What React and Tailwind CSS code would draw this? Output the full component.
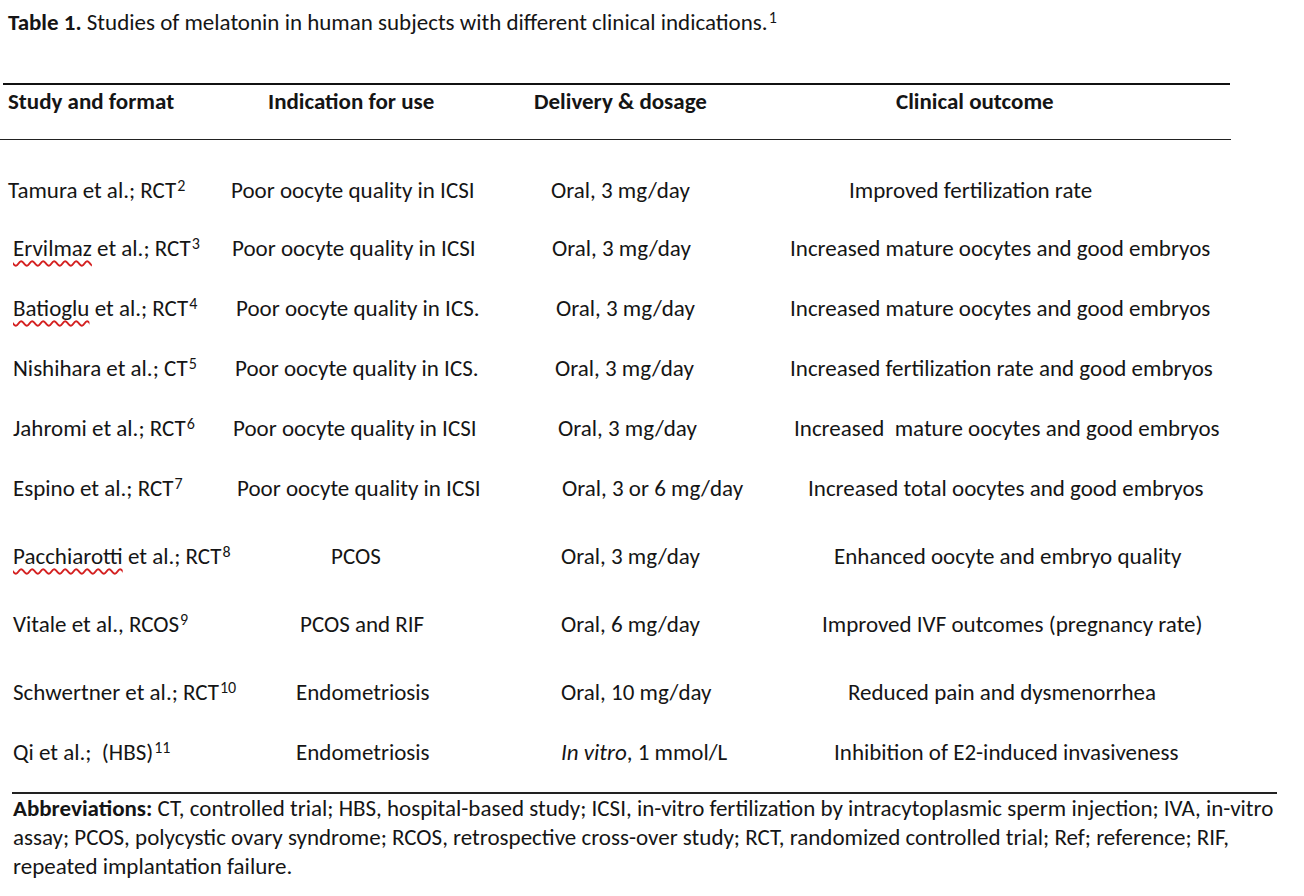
const rows = [
  {
    pads: ["pl-[8px]", "pl-[6px]", "pl-[21px]", "pl-[69px]"],
    mt: "mt-[35px]",
    study: <>Tamura et al.; RCT<Sup>2</Sup></>,
    use: "Poor oocyte quality in ICSI",
    dose: "Oral, 3 mg/day",
    outcome: "Improved fertilization rate",
  },
  {
    pads: ["pl-[13px]", "pl-[7px]", "pl-[22px]", "pl-[10px]"],
    mt: "mt-[28px]",
    study: <><Squiggle>Ervilmaz</Squiggle> et al.; RCT<Sup>3</Sup></>,
    use: "Poor oocyte quality in ICSI",
    dose: "Oral, 3 mg/day",
    outcome: "Increased mature oocytes and good embryos",
  },
  {
    pads: ["pl-[13px]", "pl-[11px]", "pl-[26px]", "pl-[10px]"],
    mt: "mt-[30px]",
    study: <><Squiggle>Batioglu</Squiggle> et al.; RCT<Sup>4</Sup></>,
    use: "Poor oocyte quality in ICS.",
    dose: "Oral, 3 mg/day",
    outcome: "Increased mature oocytes and good embryos",
  },
  {
    pads: ["pl-[13px]", "pl-[10px]", "pl-[25px]", "pl-[10px]"],
    mt: "mt-[30px]",
    study: <>Nishihara et al.; CT<Sup>5</Sup></>,
    use: "Poor oocyte quality in ICS.",
    dose: "Oral, 3 mg/day",
    outcome: "Increased fertilization rate and good embryos",
  },
  {
    pads: ["pl-[13px]", "pl-[8px]", "pl-[28px]", "pl-[14px]"],
    mt: "mt-[30px]",
    study: <>Jahromi et al.; RCT<Sup>6</Sup></>,
    use: "Poor oocyte quality in ICSI",
    dose: "Oral, 3 mg/day",
    outcome: "Increased\u00a0 mature oocytes and good embryos",
  },
  {
    pads: ["pl-[13px]", "pl-[12px]", "pl-[32px]", "pl-[28px]"],
    mt: "mt-[30px]",
    study: <>Espino et al.; RCT<Sup>7</Sup></>,
    use: "Poor oocyte quality in ICSI",
    dose: "Oral, 3 or 6 mg/day",
    outcome: "Increased total oocytes and good embryos",
  },
  {
    pads: ["pl-[13px]", "pl-[106px]", "pl-[31px]", "pl-[54px]"],
    mt: "mt-[38px]",
    study: <><Squiggle>Pacchiarotti</Squiggle> et al.; RCT<Sup>8</Sup></>,
    use: "PCOS",
    dose: "Oral, 3 mg/day",
    outcome: "Enhanced oocyte and embryo quality",
  },
  {
    pads: ["pl-[13px]", "pl-[75px]", "pl-[31px]", "pl-[42px]"],
    mt: "mt-[38px]",
    study: <>Vitale et al., RCOS<Sup>9</Sup></>,
    use: "PCOS and RIF",
    dose: "Oral, 6 mg/day",
    outcome: "Improved IVF outcomes (pregnancy rate)",
  },
  {
    pads: ["pl-[13px]", "pl-[71px]", "pl-[31px]", "pl-[68px]"],
    mt: "mt-[38px]",
    study: <>Schwertner et al.; RCT<Sup>10</Sup></>,
    use: "Endometriosis",
    dose: "Oral, 10 mg/day",
    outcome: "Reduced pain and dysmenorrhea",
  },
  {
    pads: ["pl-[13px]", "pl-[71px]", "pl-[31px]", "pl-[54px]"],
    mt: "mt-[30px]",
    study: <>Qi et al.;&nbsp; (HBS)<Sup>11</Sup></>,
    use: "Endometriosis",
    dose: <><i>In vitro</i>, 1 mmol/L</>,
    outcome: "Inhibition of E2-induced invasiveness",
  },
]

function Sup({ children }) {
  return <sup className="text-[16px] top-[-0.42em] ml-[1px]">{children}</sup>
}

function Squiggle({ children }) {
  return (
    <span className="underline decoration-wavy decoration-[#d42020] decoration-[1.5px] underline-offset-[4px]">
      {children}
    </span>
  )
}

function Row({ row }) {
  return (
    <div className={`${row.mt} grid grid-cols-[225px_305px_250px_1fr] h-[30px] items-center whitespace-nowrap`}>
      <div className={row.pads[0]}>{row.study}</div>
      <div className={row.pads[1]}>{row.use}</div>
      <div className={row.pads[2]}>{row.dose}</div>
      <div className={row.pads[3]}>{row.outcome}</div>
    </div>
  )
}

export default function App() {
  return (
    <div className="w-[1304px] h-[896px] bg-white text-[#151515] text-[23px] leading-[30px] font-['Carlito','Lato',sans-serif] overflow-hidden">
      <p className="pt-[7px] pl-[8px] whitespace-nowrap">
        <span className="font-bold">Table 1.</span> Studies of melatonin in human subjects with different clinical indications.<Sup>1</Sup>
      </p>

      <div className="mt-[46px] ml-[3px] w-[1227px] h-[2px] bg-[#111]" />

      <div className="grid grid-cols-[225px_305px_250px_1fr] h-[30px] mt-[1px] items-center font-bold whitespace-nowrap">
        <div className="pl-[8px]">Study and format</div>
        <div className="pl-[43px]">Indication for use</div>
        <div className="pl-[4px]">Delivery &amp; dosage</div>
        <div className="pl-[116px]">Clinical outcome</div>
      </div>

      <div className="mt-[23px] w-[1231px] h-[1px] bg-[#222]" />

      {rows.map((row, i) => (
        <Row key={i} row={row} />
      ))}

      <div className="mt-[25px] ml-[12px] w-[1265px] h-[2px] bg-[#222]" />

      <p className="pl-[13px] leading-[29px] whitespace-nowrap">
        <span className="font-bold">Abbreviations:</span> CT, controlled trial; HBS, hospital-based study; ICSI, in-vitro fertilization by intracytoplasmic sperm injection; IVA, in-vitro
        <br />
        assay; PCOS, polycystic ovary syndrome; RCOS, retrospective cross-over study; RCT, randomized controlled trial; Ref; reference; RIF,
        <br />
        repeated implantation failure.
      </p>
    </div>
  )
}
